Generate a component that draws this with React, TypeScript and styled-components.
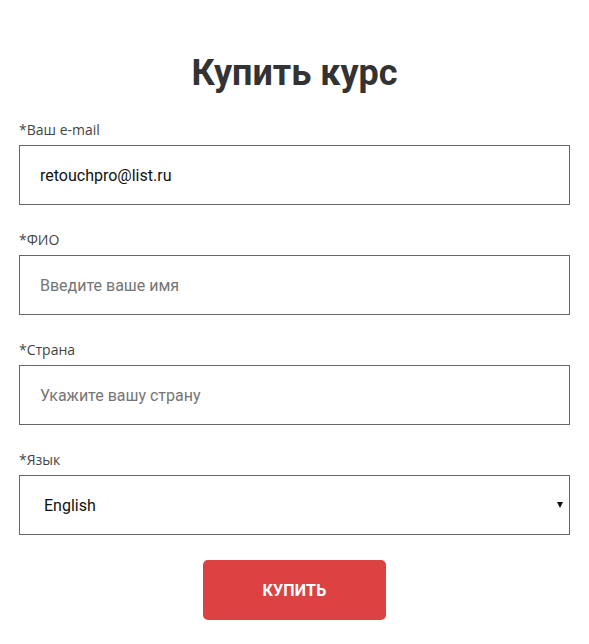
import React from "react";
import styled, { createGlobalStyle } from "styled-components";

const Global = createGlobalStyle`
  html, body { margin: 0; padding: 0; background: #fff; }
  * { box-sizing: border-box; }
`;

const Page = styled.div`
  padding: 48px 19px 24px;
  font-family: Roboto, "Noto Sans", sans-serif;
`;

const Title = styled.h1`
  margin: 0 0 22px;
  text-align: center;
  font-family: Roboto, sans-serif;
  font-weight: 700;
  font-size: 36px;
  line-height: 50px;
  color: #333;
`;

const Form = styled.form`
  display: flex;
  flex-direction: column;
  gap: 25px;
`;

const Field = styled.label`
  display: flex;
  flex-direction: column;
  gap: 5px;
`;

const Label = styled.span`
  font-family: "Open Sans", sans-serif;
  font-size: 14px;
  line-height: 20px;
  color: #444;
`;

const Input = styled.input`
  height: 60px;
  width: 100%;
  border: 1px solid #666;
  border-radius: 0;
  padding: 0 20px;
  font-family: Roboto, sans-serif;
  font-size: 16px;
  color: #111;
  outline: none;
  &::placeholder { color: #757575; }
`;

const SelectWrap = styled.div`
  position: relative;
  height: 60px;
`;

const Select = styled.select`
  appearance: none;
  height: 60px;
  width: 100%;
  border: 1px solid #666;
  border-radius: 0;
  background: #fff;
  padding: 0 24px;
  font-family: Roboto, sans-serif;
  font-size: 16px;
  color: #111;
  outline: none;
`;

const Arrow = styled.span`
  position: absolute;
  right: 7px;
  top: 27px;
  width: 0;
  height: 0;
  border-left: 3px solid transparent;
  border-right: 3px solid transparent;
  border-top: 6px solid #111;
  pointer-events: none;
`;

const Actions = styled.div`
  display: flex;
  justify-content: center;
`;

const Button = styled.button`
  width: 183px;
  height: 60px;
  border: none;
  border-radius: 5px;
  background: #dc4241;
  color: #fff;
  font-family: Roboto, sans-serif;
  font-weight: 700;
  font-size: 16px;
  letter-spacing: 0.2px;
  cursor: pointer;
`;

export default function App() {
  return (
    <>
      <Global />
      <Page>
        <Title>Купить курс</Title>
        <Form onSubmit={(e) => e.preventDefault()}>
          <Field>
            <Label>*Ваш e-mail</Label>
            <Input type="email" defaultValue="retouchpro@list.ru" />
          </Field>
          <Field>
            <Label>*ФИО</Label>
            <Input placeholder="Введите ваше имя" />
          </Field>
          <Field>
            <Label>*Страна</Label>
            <Input placeholder="Укажите вашу страну" />
          </Field>
          <Field>
            <Label>*Язык</Label>
            <SelectWrap>
              <Select defaultValue="en">
                <option value="en">English</option>
                <option value="ru">Русский</option>
              </Select>
              <Arrow />
            </SelectWrap>
          </Field>
          <Actions>
            <Button type="submit">КУПИТЬ</Button>
          </Actions>
        </Form>
      </Page>
    </>
  );
}
